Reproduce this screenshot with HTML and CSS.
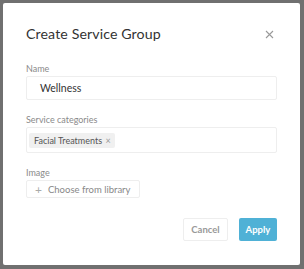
FILE: index.html
```html
<!DOCTYPE html>
<html lang="en">
<head>
  <meta charset="UTF-8">
  <meta name="viewport" content="width=device-width, initial-scale=1.0">
  <title>Create Service Group</title>
  <link rel="stylesheet" href="styles.css">
</head>
<body>
  <div class="modal">
    <div class="header">
      <h1>Create Service Group</h1>
      <span class="close">
        <svg width="9" height="9" viewBox="0 0 9 9"><path d="M1 1L8 8M8 1L1 8" stroke="#999" stroke-width="1.1" fill="none"/></svg>
      </span>
    </div>
    <div class="form-group">
      <label>Name</label>
      <div class="input">Wellness</div>
    </div>
    <div class="form-group">
      <label>Service categories</label>
      <div class="input tags">
        <span class="tag">Facial Treatments <span class="tag-x">×</span></span>
      </div>
    </div>
    <div class="form-group">
      <label>Image</label>
      <button class="choose"><span class="plus">+</span>Choose from library</button>
    </div>
    <div class="actions">
      <button class="btn cancel">Cancel</button>
      <button class="btn apply">Apply</button>
    </div>
  </div>
</body>
</html>
```
FILE: styles.css
```css
body {
  margin: 0;
  padding: 3px 4px 4px 3px;
  background-color: #707070;
  font-family: Lato, Arial, sans-serif;
}
.modal {
  width: 297px;
  height: 262px;
  box-sizing: border-box;
  background: #fff;
  border-radius: 2px;
  padding: 21px 23px 0 23px;
}
.header {
  display: flex;
  justify-content: space-between;
  align-items: center;
  height: 20px;
  margin-bottom: 19px;
}
.header h1 {
  margin: 0;
  font-size: 14.2px;
  line-height: 20px;
  font-weight: 400;
  color: #333;
  letter-spacing: 0.1px;
}
.close {
  display: flex;
  margin-right: 3px;
}
.form-group {
  margin-bottom: 14px;
}
.form-group label {
  display: block;
  font-size: 9px;
  line-height: 11px;
  color: #8a8a8a;
  margin-bottom: 2px;
}
.input {
  height: 24px;
  box-sizing: border-box;
  border: 1px solid #eee;
  border-radius: 2px;
  padding: 0 13px;
  display: flex;
  align-items: center;
  font-size: 10.5px;
  color: #333;
}
.tags {
  height: 26px;
  padding: 0 2px;
}
.tag {
  background: #f0f0f0;
  border-radius: 2px;
  padding: 2px 4px 2px 5px;
  font-size: 9px;
  color: #555;
}
.tag-x {
  color: #999;
  margin-left: 1px;
}
.choose {
  height: 18px;
  background: #fff;
  border: 1px solid #eee;
  border-radius: 2px;
  padding: 0 9px 0 8px;
  font-family: inherit;
  font-size: 9.5px;
  color: #888;
  display: flex;
  align-items: center;
}
.plus {
  font-size: 12px;
  color: #aaa;
  margin-right: 6px;
}
.actions {
  display: flex;
  justify-content: flex-end;
  gap: 11px;
  margin-top: 20px;
}
.btn {
  height: 23px;
  border-radius: 2px;
  font-family: inherit;
  font-size: 9.5px;
  font-weight: 700;
}
.cancel {
  width: 45px;
  background: #fff;
  border: 1px solid #eee;
  color: #999;
}
.apply {
  width: 38px;
  background: #4fb1d6;
  border: none;
  color: #fff;
}
```
